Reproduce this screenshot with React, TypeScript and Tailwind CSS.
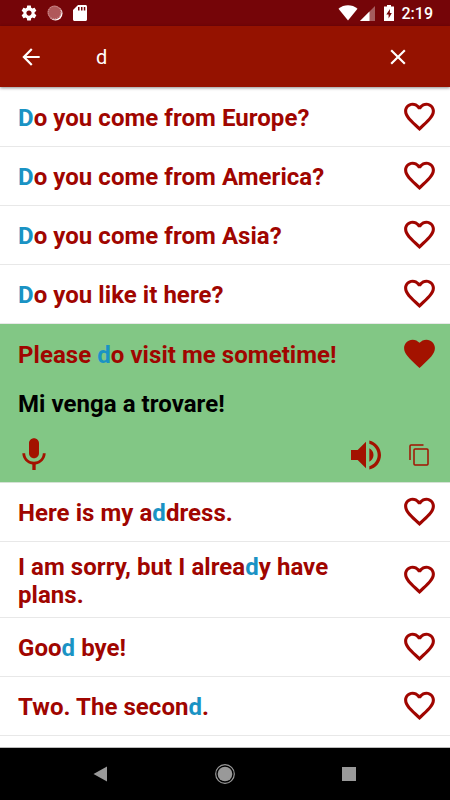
const HEART =
    "M12 21.35l-1.45-1.32C5.4 15.36 2 12.28 2 8.5 2 5.42 4.42 3 7.5 3c1.74 0 3.41.81 4.5 2.09C13.09 3.81 14.76 3 16.5 3 19.58 3 22 5.42 22 8.5c0 3.78-3.4 6.86-8.55 11.54L12 21.35z";
const HEART_OUTLINE =
    "M16.5 3c-1.74 0-3.41.81-4.5 2.09C10.91 3.81 9.24 3 7.5 3 4.42 3 2 5.42 2 8.5c0 3.78 3.4 6.86 8.55 11.54L12 21.35l1.45-1.32C18.6 15.36 22 12.28 22 8.5 22 5.42 19.58 3 16.5 3zm-4.4 15.55l-.1.1-.1-.1C7.14 14.24 4 11.39 4 8.5 4 6.5 5.5 5 7.5 5c1.54 0 3.04.99 3.57 2.36h1.87C13.46 5.99 14.96 5 16.5 5c2 0 3.5 1.5 3.5 3.5 0 2.89-3.14 5.74-7.9 10.05z";
const GEAR =
    "M19.43 12.98c.04-.32.07-.64.07-.98s-.03-.66-.07-.98l2.11-1.65c.19-.15.24-.42.12-.64l-2-3.46c-.12-.22-.39-.3-.61-.22l-2.49 1c-.52-.4-1.08-.73-1.69-.98l-.38-2.65C14.46 2.18 14.25 2 14 2h-4c-.25 0-.46.18-.49.42l-.38 2.65c-.61.25-1.17.59-1.69.98l-2.49-1c-.23-.09-.49 0-.61.22l-2 3.46c-.13.22-.07.49.12.64l2.11 1.65c-.04.32-.07.65-.07.98s.03.66.07.98l-2.11 1.65c-.19.15-.24.42-.12.64l2 3.46c.12.22.39.3.61.22l2.49-1c.52.4 1.08.73 1.69.98l.38 2.65c.03.24.24.42.49.42h4c.25 0 .46-.18.49-.42l.38-2.65c.61-.25 1.17-.59 1.69-.98l2.49 1c.23.09.49 0 .61-.22l2-3.46c.12-.22.07-.49-.12-.64l-2.11-1.65zM12 15.5c-1.93 0-3.5-1.57-3.5-3.5s1.57-3.5 3.5-3.5 3.5 1.57 3.5 3.5-1.57 3.5-3.5 3.5z";
const MIC =
    "M12 14c1.66 0 2.99-1.34 2.99-3L15 5c0-1.66-1.34-3-3-3S9 3.34 9 5v6c0 1.66 1.34 3 3 3zm5.3-3c0 3-2.54 5.1-5.3 5.1S6.7 14 6.7 11H5c0 3.41 2.72 6.23 6 6.72V21h2v-3.28c3.28-.48 6-3.3 6-6.72h-1.7z";
const VOLUME =
    "M3 9v6h4l5 5V4L7 9H3zm13.5 3c0-1.77-1.02-3.29-2.5-4.03v8.05c1.48-.73 2.5-2.25 2.5-4.02zM14 3.23v2.06c2.89.86 5 3.54 5 6.71s-2.11 5.85-5 6.71v2.06c4.01-.91 7-4.49 7-8.77s-2.99-7.86-7-8.77z";

type IconProps = { d: string; className: string };

const Icon = ({ d, className }: IconProps) => (
    <svg viewBox="0 0 24 24" fill="currentColor" className={className}>
        <path d={d} />
    </svg>
);

// [before, highlighted match, after]
type Phrase = [string, string, string];

const before: Phrase[] = [
    ["", "D", "o you come from Europe?"],
    ["", "D", "o you come from America?"],
    ["", "D", "o you come from Asia?"],
    ["", "D", "o you like it here?"],
];

const after: Phrase[] = [
    ["Here is my a", "d", "dress."],
    ["I am sorry, but I alrea", "d", "y have plans."],
    ["Goo", "d", " bye!"],
    ["Two. The secon", "d", "."],
];

const Highlight = ({ phrase }: { phrase: Phrase }) => (
    <p className="w-[345px] min-h-[38px] content-center text-[#a00500]">
        {phrase[0]}
        <span className="text-[#1a93c4]">{phrase[1]}</span>
        {phrase[2]}
    </p>
);

const Row = ({ phrase }: { phrase: Phrase }) => (
    <li className="flex justify-between items-start min-h-[59px] pt-[11px] pb-2 pl-[18px] pr-3 border-b border-[#e8e8e8]">
        <Highlight phrase={phrase} />
        <Icon d={HEART_OUTLINE} className="self-center w-[37px] h-[37px] -mt-[8px] -mb-1 text-[#a00500]" />
    </li>
);

const StatusBar = () => (
    <div className="flex justify-between items-center h-[26px] pl-5 pr-[17px] bg-[#750508] text-white">
        <div className="flex items-center gap-[9px]">
            <Icon d={GEAR} className="w-[18px] h-[18px]" />
            <svg viewBox="0 0 16 16" className="w-4 h-4">
                <circle cx="8.5" cy="8.5" r="7" fill="#fff" />
                <circle cx="7.5" cy="7.5" r="7" fill="#b0585a" />
                <circle cx="7.5" cy="7.5" r="6.3" fill="none" stroke="#d9a5a6" strokeWidth="1" strokeDasharray="1 1" />
            </svg>
            <svg viewBox="0 0 14 16" className="w-[14px] h-4 ml-[1px]">
                <path d="M5 0h7.5c.8 0 1.5.7 1.5 1.5v13c0 .8-.7 1.5-1.5 1.5h-11C.7 16 0 15.3 0 14.5V5z" fill="#fff" />
                <path d="M5 2h1.5v3.5H5zM8 2h1.5v3.5H8zM10.8 2h1.5v3.5h-1.5z" fill="#750508" />
            </svg>
        </div>
        <div className="flex items-center">
            <svg viewBox="0 0 20 16" className="w-5 h-4">
                <path d="M.5 3.8C6 -.8 14 -.8 19.5 3.8L10 15.5z" fill="#fff" />
            </svg>
            <svg viewBox="0 0 15 15" className="w-[15px] h-[15px] ml-[2px]">
                <path d="M0 15L15 0v15z" fill="#fff" fillOpacity=".35" />
                <path d="M0 15L9.5 5.5V15z" fill="#fff" />
            </svg>
            <svg viewBox="0 0 10 16" className="w-[10px] h-4 ml-[9px]">
                <path d="M3 0h4v1.5h3V16H0V1.5h3z" fill="#fff" />
                <path d="M6 4L2.3 9.5h2.3v4L7.8 8h-2z" fill="#750508" />
            </svg>
            <span className="pt-[2px] ml-2 text-[16px] leading-none font-medium">2:19</span>
        </div>
    </div>
);

const SearchBar = () => (
    <div className="relative flex items-center h-[61px] pl-[18px] pr-[39px] bg-[#951200] text-white shadow-[0_1px_3px_rgba(0,0,0,0.45)]">
        <Icon d="M20 11H7.83l5.59-5.59L12 4l-8 8 8 8 1.41-1.41L7.83 13H20v-2z" className="w-[26px] h-[26px]" />
        <span className="pt-px ml-[52px] text-[20px]">d</span>
        <Icon
            d="M19 6.41L17.59 5 12 10.59 6.41 5 5 6.41 10.59 12 5 17.59 6.41 19 12 13.41 17.59 19 19 17.59 13.41 12z"
            className="w-[26px] h-[26px] ml-auto"
        />
    </div>
);

const OpenRow = () => (
    <li className="h-[159px] pt-[11px] pl-[18px] pr-3 bg-[#82c785] border-b border-[#d5e2d5]">
        <div className="flex justify-between items-center h-[40px]">
            <Highlight phrase={["Please ", "d", "o visit me sometime!"]} />
            <Icon d={HEART} className="w-[37px] h-[37px] -mt-[3px] text-[#a31200]" />
        </div>
        <p className="mt-[15px] text-black">Mi venga a trovare!</p>
        <div className="flex items-center mt-[17px] -ml-1 text-[#a31200]">
            <Icon d={MIC} className="w-[40px] h-[40px]" />
            <Icon d={VOLUME} className="w-[40px] h-[40px] ml-auto" />
            <svg viewBox="0 0 20 22" fill="none" stroke="currentColor" strokeWidth="1.5" className="w-5 h-[22px] ml-[23px] mr-[9px]">
                <path d="M1 16V2q0-1 1-1H14.5" />
                <rect x="5" y="5" width="14" height="16" rx="1" />
            </svg>
        </div>
    </li>
);

const NavBar = () => (
    <div className="flex items-center h-[52px] pl-[93px] pr-[94px] justify-between bg-black">
        <svg viewBox="0 0 14 16" className="w-[14px] h-4">
            <path d="M14 .5v15L.5 8z" fill="#999" />
        </svg>
        <svg viewBox="0 0 20 20" className="w-5 h-5">
            <circle cx="10" cy="10" r="9.3" fill="none" stroke="#999" strokeWidth="1.2" />
            <circle cx="10" cy="10" r="7.3" fill="#999" />
        </svg>
        <div className="w-[14px] h-[14px] bg-[#999]" />
    </div>
);

const App = () => {
    return (
        <main className="flex flex-col w-[450px] h-[800px] overflow-hidden bg-white font-['Roboto',sans-serif]">
            <StatusBar />
            <SearchBar />
            <ul className="flex-1 pt-px overflow-hidden text-[24px] leading-[28px] tracking-[0.05px] font-bold border-b border-[#bbb]">
                {before.map((phrase) => (
                    <Row key={phrase[2]} phrase={phrase} />
                ))}
                <OpenRow />
                {after.map((phrase) => (
                    <Row key={phrase[0]} phrase={phrase} />
                ))}
            </ul>
            <NavBar />
        </main>
    );
};

export default App;
